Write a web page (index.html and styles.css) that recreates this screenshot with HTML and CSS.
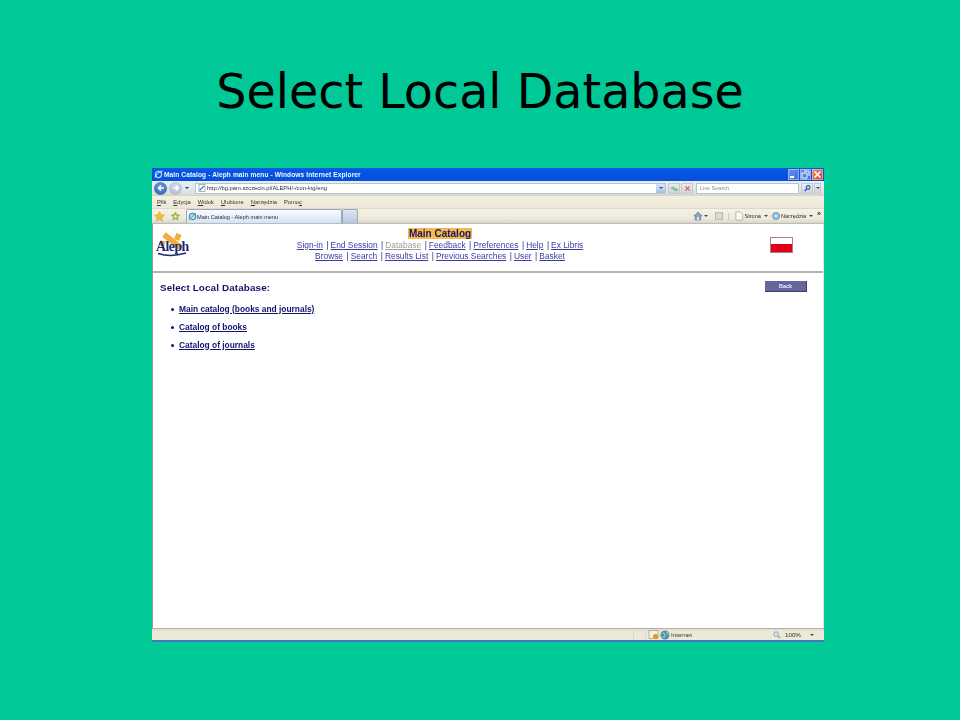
FILE: index.html
```html
<!DOCTYPE html>
<html lang="en">
<head>
<meta charset="utf-8">
<title>Select Local Database</title>
<link rel="stylesheet" href="styles.css">
</head>
<body>
<div class="slide">
  <h1 class="slide-title">Select Local Database</h1>
  <div class="window">
    <div class="titlebar">
      <svg class="ie-icon" viewBox="0 0 10 10" width="9" height="9"><circle cx="5" cy="5" r="3.4" fill="none" stroke="#a9d4f5" stroke-width="1.4"/><path d="M1 8.500C3 4 6 2 9.500 1" stroke="#f2f8ff" stroke-width="1" fill="none"/></svg>
      <span class="title-text">Main Catalog - Aleph main menu - Windows Internet Explorer</span>
      <div class="win-buttons">
        <span class="win-btn"><svg viewBox="0 0 11 11" width="11" height="11"><rect x="2" y="7" width="4" height="2" fill="#fff"/></svg></span>
        <span class="win-btn"><svg viewBox="0 0 11 11" width="11" height="11"><path d="M2 4h5v5H2zM4 2h5v5" fill="none" stroke="#fff" stroke-width="1"/></svg></span>
        <span class="win-btn close"><svg viewBox="0 0 11 11" width="11" height="11"><path d="M2.500 2.500l6 6M8.500 2.500l-6 6" stroke="#fff" stroke-width="1.600"/></svg></span>
      </div>
    </div>
    <div class="addressbar">
      <span class="nav-btn back"><svg viewBox="0 0 12 12" width="12" height="12"><path d="M9.500 6H3M6 3L3 6l3 3" fill="none" stroke="#fff" stroke-width="1.700"/></svg></span>
      <span class="nav-btn forward"><svg viewBox="0 0 12 12" width="12" height="12"><path d="M2.500 6H9M6 3l3 3-3 3" fill="none" stroke="#fff" stroke-width="1.500"/></svg></span>
      <span class="caret"></span>
      <div class="url-box">
        <svg class="page-icon" viewBox="0 0 8 8" width="8" height="8"><rect x="1" y="0.500" width="6" height="7" fill="#fff" stroke="#8a97a8" stroke-width=".7"/><path d="M1.500 6.500L6 2" stroke="#3a8fd0" stroke-width="1.400"/></svg>
        <span class="url">http://bg.pam.szczecin.pl/ALEPH/-/con-lng/eng</span>
        <span class="url-drop"><span class="caret blue"></span></span>
      </div>
      <span class="tool-btn"><svg viewBox="0 0 11 11" width="11" height="11"><path d="M1 5h4M3.500 3L5.500 5 3.500 7" stroke="#3aa53a" fill="none" stroke-width="1"/><path d="M10 7H6M7.500 5L5.500 7l2 2" stroke="#3aa53a" fill="none" stroke-width="1"/></svg></span>
      <span class="tool-btn"><svg viewBox="0 0 11 11" width="11" height="11"><path d="M3 3l5 5M8 3L3 8" stroke="#c8564a" stroke-width="1.300"/></svg></span>
      <div class="search-box">Live Search</div>
      <span class="tool-btn search-go"><svg viewBox="0 0 11 11" width="11" height="11"><circle cx="6.300" cy="4.300" r="2.300" fill="none" stroke="#24509a" stroke-width="1.300"/><path d="M4.500 6L2 8.500" stroke="#24509a" stroke-width="1.600"/></svg></span>
      <span class="tool-btn small"><span class="caret blue"></span></span>
    </div>
    <div class="menubar">
      <span><u>P</u>lik</span><span><u>E</u>dycja</span><span><u>W</u>idok</span><span><u>U</u>lubione</span><span><u>N</u>arzędzia</span><span>Pomo<u>c</u></span>
    </div>
    <div class="tabbar">
      <svg class="fav" viewBox="0 0 11 11" width="11" height="11"><path d="M5.500 .5l1.500 3.300 3.500.4-2.600 2.400.7 3.500-3.100-1.800-3.100 1.800.7-3.500L.5 4.200 4 3.800z" fill="#f4bd3a" stroke="#d89a20" stroke-width=".5"/></svg>
      <svg class="fav add" viewBox="0 0 11 11" width="11" height="11"><path d="M5.500 1l1.200 2.800 3 .3-2.200 2 .6 3-2.600-1.500-2.600 1.500.6-3-2.200-2 3-.3z" fill="#9fc53a" stroke="#5f9a2a" stroke-width=".5"/><circle cx="5.500" cy="5.500" r="1.300" fill="#f4f2e0"/></svg>
      <div class="tab active">
        <svg viewBox="0 0 10 10" width="9" height="9"><circle cx="5" cy="5" r="3.500" fill="#bfe0f5" stroke="#3a8fc0" stroke-width="1.300"/><path d="M1 8.500L8.500 1.500" stroke="#4aa04a" stroke-width="1"/></svg>
        <span>Main Catalog - Aleph main menu</span>
      </div>
      <div class="tab new"></div>
      <div class="cmd-tools">
        <svg viewBox="0 0 11 11" width="10" height="10"><path d="M1 5.500L5.500 1 10 5.500H8.500V10h-6V5.500z" fill="#8aa4bc" stroke="#4d6a88" stroke-width=".6"/><rect x="4.500" y="6.500" width="2" height="3.500" fill="#e8eef2"/></svg>
        <span class="caret dark home-caret"></span>
        <svg class="feed-icon" viewBox="0 0 11 11" width="10" height="10"><rect x="1.500" y="2" width="8" height="7" fill="#d8ddd0" stroke="#9aa59a" stroke-width=".8"/></svg>
        <span class="sep"></span>
        <svg viewBox="0 0 11 11" width="10" height="10"><path d="M2 1h5l2.500 2.500V10H2z" fill="#fbfaf2" stroke="#a0a498" stroke-width=".8"/></svg>
        <span class="cmd-label">Strona</span>
        <span class="caret dark"></span>
        <svg class="gear-icon" viewBox="0 0 11 11" width="10" height="10"><circle cx="5.500" cy="5.500" r="4" fill="#8fbde0" stroke="#6f96b8" stroke-width=".8"/><circle cx="5.500" cy="5.500" r="1.500" fill="#e4eef4"/></svg>
        <span class="cmd-label">Narzędzia</span>
        <span class="caret dark"></span>
        <span class="chevrons">»</span>
      </div>
    </div>
    <div class="page">
      <header class="page-header">
        <div class="logo">
          <svg viewBox="0 0 34 26" width="34" height="26"><path d="M9 3.500L26 17M24 3l-2.500 6M8 10l-1.500 5" fill="none" stroke="#f3ad3c" stroke-width="5.500"/><path d="M3 22.500Q16 26.500 31 22" stroke="#1e2a78" stroke-width="1.500" fill="none"/></svg>
          <span class="logo-text">Aleph</span>
        </div>
        <nav class="nav">
          <div class="nav-title"><span>Main Catalog</span></div>
          <div class="nav-row">
            <a>Sign-in</a><i>|</i><a>End Session</a><i>|</i><a class="off">Database</a><i>|</i><a>Feedback</a><i>|</i><a>Preferences</a><i>|</i><a>Help</a><i>|</i><a>Ex Libris</a>
          </div>
          <div class="nav-row">
            <a>Browse</a><i>|</i><a>Search</a><i>|</i><a>Results List</a><i>|</i><a>Previous Searches</a><i>|</i><a>User</a><i>|</i><a>Basket</a>
          </div>
        </nav>
        <div class="flag"><span class="flag-red"></span></div>
      </header>
      <main class="page-main">
        <div class="heading-row">
          <h2>Select Local Database:</h2>
          <span class="back-button">Back</span>
        </div>
        <ul class="db-list">
          <li><a>Main catalog (books and journals)</a></li>
          <li><a>Catalog of books</a></li>
          <li><a>Catalog of journals</a></li>
        </ul>
      </main>
    </div>
    <div class="statusbar">
      <span class="status-main"></span>
      <span class="status-cell"></span>
      <span class="status-cell narrow"></span>
      <span class="status-lock"><svg viewBox="0 0 11 11" width="11" height="11"><rect x="1" y="1.500" width="9" height="8" fill="#f4f2e6" stroke="#a8a090" stroke-width=".8"/><circle cx="7.500" cy="7.500" r="2.500" fill="#e8951f"/></svg></span>
      <span class="status-zone"><svg viewBox="0 0 10 10" width="10" height="10"><circle cx="5" cy="5" r="4.500" fill="#4f8fb0"/><path d="M2 3.500c2-1 3 0 3 2s-2 2-2.500 1M6 2c2 0 2.500 2 1.500 3" stroke="#9fd0a0" stroke-width="1.200" fill="none"/></svg>Internet</span>
      <span class="status-zoom"><svg viewBox="0 0 9 9" width="8" height="8"><circle cx="3.500" cy="3.500" r="2.500" fill="#dfe9ef" stroke="#7a94aa" stroke-width=".9"/><path d="M5.500 5.500L8 8" stroke="#7a94aa" stroke-width="1.200"/></svg>100%<span class="caret dark zoom-caret"></span></span>
    </div>
  </div>
</div>
</body>
</html>
```

FILE: styles.css
```css
* { box-sizing: border-box; }
html, body { margin: 0; padding: 0; }
body {
  width: 960px;
  height: 720px;
  overflow: hidden;
  background: #00c896;
}
.slide {
  height: 720px;
  display: flex;
  flex-direction: column;
  align-items: center;
  padding-top: 60px;
  font-family: "Liberation Sans", Arial, sans-serif;
}
.slide-title {
  margin: 0;
  height: 108px;
  font-family: "DejaVu Sans", sans-serif;
  font-weight: 400;
  font-size: 47.6px;
  line-height: 63px;
  color: #000;
}
.window {
  width: 672px;
  height: 474px;
  margin-left: 16px;
  display: flex;
  flex-direction: column;
  background: #ece9d8;
  filter: blur(0.45px);
}
.titlebar {
  height: 13px;
  display: flex;
  align-items: center;
  padding: 0 1px 0 2px;
  background: linear-gradient(#0a5ae0 0%, #0053e4 50%, #0a4fd8 100%);
}
.ie-icon { flex: none; }
.title-text {
  margin-left: 1px;
  font-size: 6.6px;
  font-weight: 700;
  color: #f2f6ff;
  letter-spacing: .1px;
  white-space: nowrap;
}
.win-buttons { margin-left: auto; display: flex; gap: 1px; }
.win-btn {
  width: 11px;
  height: 11px;
  display: block;
  background: linear-gradient(135deg, #6f94e8, #3f68d8);
  outline: 1px solid rgba(220,230,250,.5);
  outline-offset: -1px;
}
.win-btn.close { background: linear-gradient(135deg, #ea8a68, #d8482a); }
.win-btn svg { display: block; }
.addressbar {
  height: 14px;
  display: flex;
  align-items: center;
  padding: 0 2px;
  background: linear-gradient(#eaeef4, #e2e6ee 60%, #d8dcd8);
}
.nav-btn {
  width: 13px;
  height: 13px;
  border-radius: 50%;
  display: flex;
  align-items: center;
  justify-content: center;
  flex: none;
}
.nav-btn svg { width: 10px; height: 10px; }
.nav-btn.back { background: radial-gradient(circle at 50% 35%, #6f9fe0, #2557a8); }
.nav-btn.forward { margin-left: 2px; background: radial-gradient(circle at 50% 35%, #d4dcec, #a4b2cc); }
.caret {
  display: block;
  flex: none;
  width: 0;
  height: 0;
  margin-left: 3px;
  border-left: 2px solid transparent;
  border-right: 2px solid transparent;
  border-top: 2px solid #334;
}
.caret.blue { margin: 0; border-top-color: #2a4c90; }
.caret.dark { border-top-color: #444; }
.url-box {
  width: 471px;
  height: 11px;
  margin-left: 6px;
  display: flex;
  align-items: center;
  background: #fff;
  border: 1px solid #b8c4d4;
}
.page-icon { margin-left: 2px; flex: none; }
.url { margin-left: 1px; font-size: 5.8px; color: #2a2a3a; white-space: nowrap; }
.url-drop {
  margin-left: auto;
  width: 9px;
  height: 9px;
  display: flex;
  align-items: center;
  justify-content: center;
  background: linear-gradient(#d7e4f8, #a8c0e6);
}
.tool-btn {
  width: 12px;
  height: 11px;
  margin-left: 2px;
  display: flex;
  align-items: center;
  justify-content: center;
  flex: none;
  background: linear-gradient(#e8ebf0, #d0d4d8);
  border: 1px solid #c6c9c8;
}
.tool-btn + .tool-btn { margin-left: 1px; }
.tool-btn svg { width: 9px; height: 9px; }
.search-box {
  width: 103px;
  height: 11px;
  margin-left: 3px;
  padding-left: 3px;
  background: #fff;
  border: 1px solid #b8c4d4;
  font-size: 5.5px;
  line-height: 9px;
  color: #8a8f9a;
  white-space: nowrap;
}
.tool-btn.search-go { width: 12px; margin-left: 2px; background: linear-gradient(#e8eef8, #c8d4ec); }
.tool-btn.small { width: 7px; margin-left: 1px; }
.menubar {
  height: 13px;
  display: flex;
  align-items: center;
  gap: 7px;
  padding-left: 5px;
  background: linear-gradient(#f3f0e2, #ece8d8);
  border-top: 1px solid #d8d4c4;
  font-size: 5.8px;
  color: #333;
}
.tabbar {
  height: 16px;
  display: flex;
  align-items: center;
  padding-left: 2px;
  background: linear-gradient(#f5f2e4, #eee9da 70%, #d9d6c8);
  border-top: 1px solid #dedacb;
  border-bottom: 1px solid #b8bcc0;
}
.fav { flex: none; }
.fav.add { margin-left: 5px; }
.tab {
  height: 14px;
  align-self: flex-end;
  display: flex;
  align-items: center;
  border: 1px solid #9aa8b8;
  border-bottom: 0;
  border-radius: 2px 2px 0 0;
  background: linear-gradient(#fbfcff, #d4e2f5);
}
.tab.active {
  width: 156px;
  margin-left: 5px;
  padding-left: 1px;
  font-size: 5.6px;
  color: #2b2b3a;
  white-space: nowrap;
}
.tab.new { width: 16px; background: linear-gradient(#dfe6f2, #b8c6dc); }
.cmd-tools {
  margin-left: auto;
  display: flex;
  align-items: center;
  padding-right: 3px;
  font-size: 5.6px;
  color: #2d2d3a;
  align-self: flex-start;
  height: 14px;
}
.cmd-tools .home-caret { margin-left: 1px; }
.feed-icon { margin-left: 6px; }
.gear-icon { margin-left: 3px; }
.sep { width: 1px; height: 7px; margin: 0 5px 0 4px; background: #d0ccbc; }
.cmd-label { white-space: nowrap; }
.chevrons { margin-left: 4px; margin-top: -6px; font-size: 7px; font-weight: 700; color: #333; }
.page {
  flex: 1;
  min-height: 0;
  background: #fff;
  border-left: 1px solid #9a9a8e;
  border-right: 1px solid #e4e4da;
  display: flex;
  flex-direction: column;
}
.page-header {
  height: 49px;
  display: flex;
  border-bottom: 2px solid #b5b5ae;
}
.logo {
  position: relative;
  width: 40px;
  margin-left: 2px;
  flex: none;
}
.logo svg { display: block; margin-top: 7px; }
.logo-text {
  position: absolute;
  left: 1px;
  top: 15px;
  font-family: "Liberation Serif", serif;
  font-size: 14px;
  font-weight: 700;
  letter-spacing: -.6px;
  color: #1e2a78;
}
.nav {
  width: 480px;
  margin-left: 5px;
  padding-top: 5px;
  text-align: center;
  font-size: 8.4px;
  line-height: 10.5px;
}
.nav-title {
  font-size: 10px;
  font-weight: 700;
  line-height: 10px;
  color: #18186e;
}
.nav-title span { background: #f7b84a; padding: 0 1px; }
.nav-row { color: #2a2a6a; white-space: nowrap; margin-top: .5px; }
.nav-row a { color: #3c3ca0; text-decoration: underline; }
.nav-row a.off { color: #9c9c9c; }
.nav-row i { font-style: normal; margin: 0 2px 0 3.5px; }
.flag {
  width: 23px;
  height: 16px;
  margin: 13px 0 0 90px;
  flex: none;
  display: flex;
  align-items: flex-end;
  background: #fff;
  border: 1px solid #b08080;
}
.flag-red { display: block; width: 100%; height: 8px; background: #e00018; }
.page-main {
  flex: 1;
  padding: 8px 16px 0 7px;
  color: #14146e;
}
.heading-row {
  display: flex;
  justify-content: space-between;
  align-items: flex-start;
}
.heading-row h2 {
  margin: 0;
  font-size: 9.9px;
  line-height: 13px;
  letter-spacing: .12px;
  font-weight: 700;
}
.back-button {
  width: 42px;
  height: 11px;
  background: #66669c;
  border-right: 1px solid #3c3c66;
  border-bottom: 1px solid #3c3c66;
  color: #eef;
  font-size: 5.5px;
  font-weight: 700;
  text-align: center;
  line-height: 10px;
}
.db-list {
  list-style: none;
  margin: 9.5px 0 0;
  padding: 0 0 0 19px;
  font-size: 8.4px;
  line-height: 10px;
  font-weight: 700;
}
.db-list li { position: relative; margin-bottom: 8px; }
.db-list li::before {
  content: "";
  position: absolute;
  left: -8px;
  top: 4px;
  width: 3px;
  height: 3px;
  border-radius: 50%;
  background: #14146e;
}
.db-list a { color: #14146e; text-decoration: underline; }
.statusbar {
  height: 14px;
  display: flex;
  align-items: center;
  background: linear-gradient(#e2dfcf, #ece9d8 25%);
  border-top: 1px solid #b3b0a0;
  border-bottom: 2px solid #3f78c0;
  font-size: 6.2px;
  color: #333;
}
.statusbar svg { flex: none; }
.status-main { width: 481px; }
.status-cell { width: 12px; height: 10px; border-left: 1px solid #dcd8c8; }
.status-cell.narrow { width: 3px; }
.status-lock { display: flex; }
.status-zone {
  display: flex;
  align-items: center;
  gap: 1px;
  margin-left: 1px;
  width: 113px;
}
.status-zoom { display: flex; align-items: center; gap: 4px; }
.zoom-caret { margin-left: 5px; }
```
